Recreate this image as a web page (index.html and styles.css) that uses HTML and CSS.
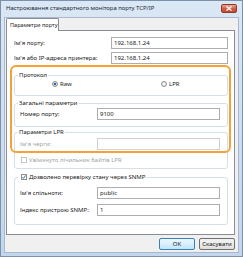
FILE: index.html
```html
<!DOCTYPE html>
<html lang="uk">
<head>
    <meta charset="UTF-8">
    <title>Настроювання стандартного монітора порту TCP/IP</title>
    <link rel="stylesheet" href="styles.css">
</head>
<body>
    <div class="window">
        <div class="titlebar">
            <span class="title">Настроювання стандартного монітора порту TCP/IP</span>
            <span class="close">
                <svg width="6" height="5" viewBox="0 0 6 5"><path d="M0.5 0.5 L5.5 4.5 M5.5 0.5 L0.5 4.5" stroke="#fff" stroke-width="1.3"/></svg>
            </span>
        </div>
        <div class="client">
            <div class="tabs">
                <div class="tab">Параметри порту</div>
            </div>
            <div class="panel">
                <div class="row">
                    <span class="label top-label">Ім'я порту:</span>
                    <div class="input top-input">192.168.1.24</div>
                </div>
                <div class="row">
                    <span class="label top-label">Ім'я або IP-адреса принтера:</span>
                    <div class="input top-input">192.168.1.24</div>
                </div>

                <fieldset class="group protocol">
                    <legend>Протокол</legend>
                    <div class="radios">
                        <span class="radio-item first"><span class="radio checked"></span>Raw</span>
                        <span class="radio-item"><span class="radio"></span>LPR</span>
                    </div>
                </fieldset>

                <fieldset class="group general">
                    <legend>Загальні параметри</legend>
                    <div class="row">
                        <span class="label group-label">Номер порту:</span>
                        <div class="input group-input">9100</div>
                    </div>
                </fieldset>

                <fieldset class="group lpr">
                    <legend>Параметри LPR</legend>
                    <div class="row">
                        <span class="label group-label disabled">Ім'я черги:</span>
                        <div class="input group-input disabled-input"></div>
                    </div>
                    <div class="check-row disabled">
                        <span class="checkbox disabled-box"></span>Увімкнуто лічильник байтів LPR
                    </div>
                </fieldset>

                <fieldset class="group snmp">
                    <legend>
                        <span class="checkbox checked">
                            <svg width="4" height="4" viewBox="0 0 4 4"><path d="M0.4 2.2 L1.5 3.4 L3.6 0.4" fill="none" stroke="#2b5fa8" stroke-width="0.9"/></svg>
                        </span>Дозволено перевірку стану через SNMP
                    </legend>
                    <div class="row">
                        <span class="label group-label">Ім'я спільноти:</span>
                        <div class="input group-input">public</div>
                    </div>
                    <div class="row">
                        <span class="label group-label">Індекс пристрою SNMP:</span>
                        <div class="input group-input">1</div>
                    </div>
                </fieldset>

                <div class="highlight"></div>
            </div>
            <div class="buttons">
                <button class="btn default">OK</button>
                <button class="btn">Скасувати</button>
            </div>
        </div>
    </div>
</body>
</html>
```

FILE: styles.css
```css
* {
    box-sizing: border-box;
}
body {
    margin: 0;
    font-family: "Noto Sans", "DejaVu Sans", sans-serif;
    font-size: 6px;
    color: #1b1b1b;
    white-space: nowrap;
}
.window {
    width: 243px;
    height: 257px;
    background: linear-gradient(#dae7f5, #c2d6ed);
    border: 1px solid #7d91ab;
    display: flex;
    flex-direction: column;
}
.titlebar {
    height: 16px;
    display: flex;
    justify-content: space-between;
    align-items: flex-start;
    padding: 0 5px 0 5px;
}
.title {
    margin-top: 3px;
    line-height: 8px;
    color: #1e2a38;
    letter-spacing: -0.05px;
}
.close {
    margin-top: 3px;
    width: 16px;
    height: 9px;
    border: 1px solid #8b3a2c;
    border-radius: 2px;
    background: linear-gradient(#e8a896, #d45f46 50%, #c24a30);
    display: flex;
    align-items: center;
    justify-content: center;
}
.client {
    flex: 1;
    margin: 0 3px 3px 3px;
    background-color: #f0f0f0;
    border: 1px solid #a9b8cb;
    padding: 0 3px 0 1px;
}
.tabs {
    display: flex;
    height: 12px;
}
.tab {
    position: relative;
    z-index: 1;
    width: 53px;
    height: 13px;
    background-color: white;
    border: 1px solid #898c95;
    border-bottom: none;
    border-radius: 2px 2px 0 0;
    padding: 2px 0 0 3px;
    font-size: 5.6px;
    line-height: 8px;
}
.panel {
    position: relative;
    height: 205px;
    background-color: white;
    border: 1px solid #898c95;
    padding: 6px 5px 0 7px;
}
.row {
    display: flex;
    align-items: center;
    height: 12px;
}
.row + .row {
    margin-top: 3px;
}
.label {
    flex: none;
    line-height: 8px;
}
.top-label {
    width: 97px;
}
.group-label {
    width: 77px;
}
.input {
    height: 12px;
    border: 1px solid #abadb3;
    background-color: white;
    padding-left: 2px;
    line-height: 10px;
}
.top-input {
    width: 117px;
}
.group-input {
    width: 123px;
}
.disabled {
    color: #a3a3a3;
}
.disabled-input {
    border-color: #cfd1d6;
}
.group {
    margin: 0 1px 0 0;
    padding: 0 6px 0 5px;
    border: 1px solid #d5dfe5;
    border-radius: 3px;
    min-width: 0;
}
.group legend {
    padding: 0 1px;
    margin-left: -2px;
    line-height: 8px;
    display: flex;
    align-items: center;
}
.protocol {
    margin-top: 7px;
    padding-bottom: 7px;
}
.radios {
    display: flex;
    height: 8px;
    margin-top: 1px;
    align-items: center;
}
.radio-item {
    display: flex;
    align-items: center;
}
.radio-item.first {
    margin-left: 32px;
    width: 109px;
}
.radio {
    width: 6px;
    height: 6px;
    border-radius: 50%;
    border: 1px solid #8e8f8f;
    background: radial-gradient(#ffffff, #dcdcdc);
    margin-right: 2px;
}
.radio.checked {
    background: radial-gradient(circle, #2a62b8 0, #2a62b8 1.3px, #e4e4e4 1.6px);
}
.general {
    margin-top: 3px;
    padding-bottom: 6px;
}
.general .row {
    margin-top: 1px;
}
.lpr {
    margin-top: 1px;
    padding-bottom: 4px;
}
.lpr .row {
    margin-top: 2px;
}
.check-row {
    display: flex;
    align-items: center;
    height: 8px;
    margin-top: 6px;
    padding-left: 1px;
}
.checkbox {
    width: 6px;
    height: 6px;
    border: 1px solid #8f8f8f;
    background-color: white;
    margin-right: 2px;
    display: flex;
    align-items: center;
    justify-content: center;
}
.disabled-box {
    border-color: #c6c6c6;
}
.snmp legend .checkbox {
    margin-left: 2px;
}
.snmp {
    margin-top: 4px;
    padding-bottom: 8px;
}
.snmp .row:first-of-type {
    margin-top: 6px;
}
.snmp .row + .row {
    margin-top: 5px;
}
.highlight {
    position: absolute;
    left: 3px;
    top: 34px;
    width: 221px;
    height: 88px;
    border: 2px solid #f4a235;
    border-radius: 6px;
}
.buttons {
    display: flex;
    justify-content: flex-end;
    gap: 4px;
    margin-top: 3px;
}
.btn {
    width: 36px;
    height: 12px;
    padding: 0;
    font-family: inherit;
    font-size: 6px;
    line-height: 10px;
    color: #1b1b1b;
    border: 1px solid #707070;
    border-radius: 2px;
    background: linear-gradient(#f2f2f2, #ebebeb 50%, #dddddd);
}
.btn.default {
    border-color: #3c7fb1;
    background: linear-gradient(#eaf6fd, #d9f0fc 50%, #bee6fd);
}
```
